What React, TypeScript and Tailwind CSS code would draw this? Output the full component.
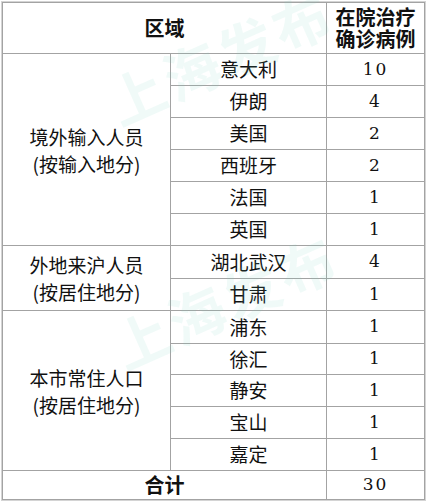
import type { ReactNode } from "react";

type Group = {
  label: string[];
  rows: [string, string][];
};

const groups: Group[] = [
  {
    label: ["境外输入人员", "(按输入地分)"],
    rows: [
      ["意大利", "10"],
      ["伊朗", "4"],
      ["美国", "2"],
      ["西班牙", "2"],
      ["法国", "1"],
      ["英国", "1"],
    ],
  },
  {
    label: ["外地来沪人员", "(按居住地分)"],
    rows: [
      ["湖北武汉", "4"],
      ["甘肃", "1"],
    ],
  },
  {
    label: ["本市常住人口", "(按居住地分)"],
    rows: [
      ["浦东", "1"],
      ["徐汇", "1"],
      ["静安", "1"],
      ["宝山", "1"],
      ["嘉定", "1"],
    ],
  },
];

const cjk = "font-['Microsoft_YaHei','Noto_Sans_CJK_SC',sans-serif]";
const num = "font-['DejaVu_Serif','Liberation_Serif',serif]";

function Cell({
  children,
  className = "",
  span,
}: {
  children: ReactNode;
  className?: string;
  span?: [number, number];
}) {
  return (
    <div
      className={`flex items-center justify-center bg-white text-[#111] ${className}`}
      style={span ? { gridRow: `${span[0]} / span ${span[1]}`, gridColumn: "1" } : undefined}
    >
      {children}
    </div>
  );
}

function Watermark({ className }: { className: string }) {
  return (
    <div
      className={`pointer-events-none absolute select-none whitespace-nowrap text-[56px] font-bold leading-none tracking-[4px] text-[rgba(120,205,195,0.11)] ${cjk} ${className}`}
    >
      上海发布
    </div>
  );
}

export default function App() {
  let rowStart = 2;

  return (
    <div className="relative h-[502px] w-[426px] overflow-hidden bg-white pl-px pt-px">
      <div className="w-[425px] border border-[#d4d4d4]">
        <div className="grid grid-cols-[167px_155px_97px] grid-rows-[50px_31px_31px_31px_31px_31px_31px_32px_31px_32px_30px_31px_31px_31px_28px] gap-px bg-[#a3a3a3] p-px">
          <Cell className={`col-span-2 text-[20px] font-bold ${cjk}`}>区域</Cell>
          <Cell className={`flex-col text-[20px] font-bold leading-[22px] ${cjk}`}>
            <span>在院治疗</span>
            <span>确诊病例</span>
          </Cell>

          {groups.map((g) => {
            const start = rowStart;
            rowStart += g.rows.length;
            return [
              <Cell
                key={g.label[0]}
                span={[start, g.rows.length]}
                className={`flex-col text-[19px] leading-[27px] ${cjk}`}
              >
                {g.label.map((l) => (
                  <span key={l}>{l}</span>
                ))}
              </Cell>,
              ...g.rows.flatMap(([place, count]) => [
                <Cell key={place} className={`text-[19px] ${cjk}`}>
                  {place}
                </Cell>,
                <Cell key={place + "-n"} className={`text-[17px] tracking-[2px] ${num}`}>
                  {count}
                </Cell>,
              ]),
            ];
          })}

          <Cell className={`col-span-2 text-[20px] font-bold ${cjk}`}>合计</Cell>
          <Cell className={`text-[17px] tracking-[2px] ${num}`}>30</Cell>
        </div>
      </div>

      <Watermark className="left-[100px] top-[28px] -rotate-[24deg]" />
      <Watermark className="left-[105px] top-[272px] -rotate-[24deg]" />
    </div>
  );
}
